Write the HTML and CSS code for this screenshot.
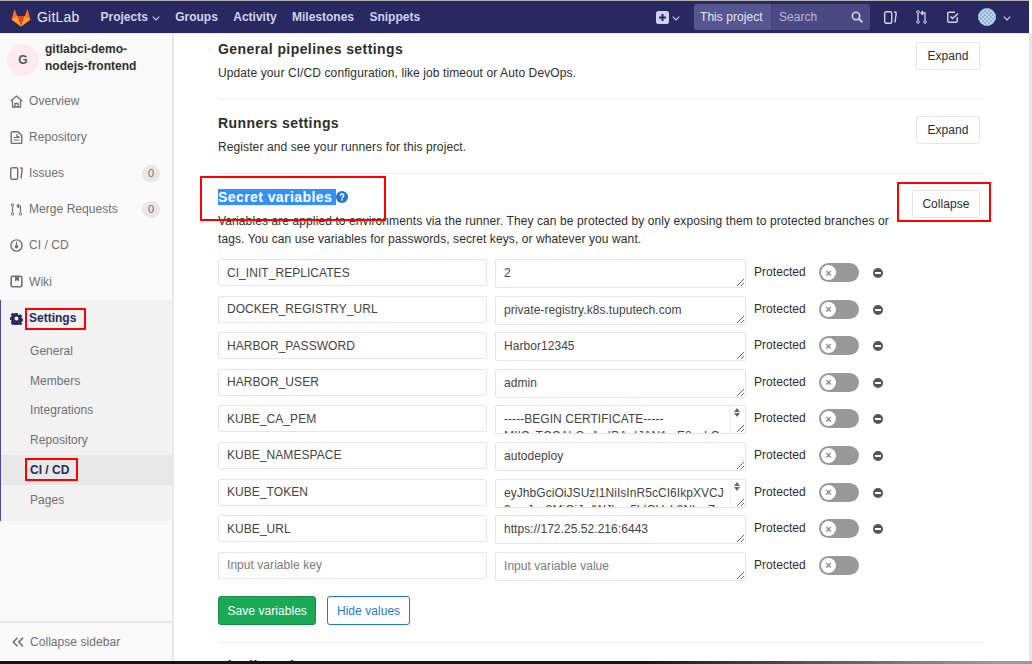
FILE: index.html
```html
<!DOCTYPE html>
<html lang="en">
<head>
    <meta charset="UTF-8">
    <meta name="viewport" content="width=device-width, initial-scale=1.0">
    <title>CI / CD Settings</title>
    <link rel="stylesheet" href="styles.css">
</head>
<body>
<div class="page">
    <header class="navbar">
        <a class="brand">
            <svg class="tanuki" width="20" height="19" viewBox="0 0 20 19">
                <path fill="#fc6d26" d="M10 18.5 0.6 11.4 3.4 1l2.9 7h7.4l2.9-7 2.8 10.4z"/>
                <path fill="#e24329" d="M10 18.5 6.3 8h7.4z"/>
                <path fill="#fca326" d="M0.6 11.4 6.3 8 10 18.5zM19.4 11.4 13.7 8 10 18.5z"/>
            </svg>
            <span class="brand-name">GitLab</span>
        </a>
        <nav class="nav-links">
            <a>Projects
                <svg class="caret" width="8" height="5" viewBox="0 0 8 5"><path d="M.7.7 4 4 7.3.7" fill="none" stroke="currentColor" stroke-width="1.1"/></svg>
            </a>
            <a>Groups</a>
            <a>Activity</a>
            <a>Milestones</a>
            <a>Snippets</a>
        </nav>
        <div class="nav-right">
            <span class="new-btn">
                <svg width="13" height="13" viewBox="0 0 13 13"><rect width="13" height="13" rx="2.5" fill="#d1d1f0"/><path d="M6.5 3v7M3 6.5h7" stroke="#292961" stroke-width="2"/></svg>
                <svg class="caret" width="8" height="5" viewBox="0 0 8 5"><path d="M.7.7 4 4 7.3.7" fill="none" stroke="currentColor" stroke-width="1.1"/></svg>
            </span>
            <div class="search">
                <span class="search-scope">This project</span>
                <span class="search-input">Search</span>
                <svg width="12" height="12" viewBox="0 0 12 12"><circle cx="5" cy="5" r="3.7" fill="none" stroke="#d1d1f0" stroke-width="1.6"/><path d="M7.8 7.8 11.3 11.3" stroke="#d1d1f0" stroke-width="2"/></svg>
            </div>
            <span class="nav-icon">
                <svg width="13" height="13" viewBox="0 0 13 13"><rect x=".7" y=".7" width="7" height="11.6" rx="1.5" fill="none" stroke="#d1d1f0" stroke-width="1.4"/><path d="M10 1h1.2q1 0 1 1.2L11 11.5" fill="none" stroke="#d1d1f0" stroke-width="1.4"/></svg>
            </span>
            <span class="nav-icon">
                <svg width="11" height="14" viewBox="0 0 11 14"><circle cx="2" cy="12" r="1.3" fill="none" stroke="#d1d1f0"/><circle cx="9" cy="12" r="1.3" fill="none" stroke="#d1d1f0"/><circle cx="2" cy="2" r="1.3" fill="none" stroke="#d1d1f0"/><path d="M2 3.5v7M9 10.5V3H6M7 1 5 3l2 2" fill="none" stroke="#d1d1f0" stroke-width="1.3"/></svg>
            </span>
            <span class="nav-icon">
                <svg width="12" height="12" viewBox="0 0 12 12"><path d="M8 1.2H2Q.8 1.2.8 2.4V10q0 1.2 1.2 1.2h7q1.2 0 1.2-1.2V6" fill="none" stroke="#d1d1f0" stroke-width="1.4"/><path d="M3.5 5.5 5.5 7.5 11 2.5" fill="none" stroke="#d1d1f0" stroke-width="1.5"/></svg>
            </span>
            <span class="avatar-wrap">
                <span class="user-avatar"></span>
                <svg class="caret" width="8" height="5" viewBox="0 0 8 5"><path d="M.7.7 4 4 7.3.7" fill="none" stroke="currentColor" stroke-width="1.1"/></svg>
            </span>
        </div>
    </header>

    <div class="layout">
        <aside class="sidebar">
            <div class="project-head">
                <span class="project-avatar">G</span>
                <span class="project-name">gitlabci-demo-<br>nodejs-frontend</span>
            </div>
            <ul class="side-menu">
                <li>
                    <svg width="13" height="13" viewBox="0 0 13 13"><path d="M.8 6 6.5 1l5.7 5M2.5 5.5V12h8V5.5M5 12V8.5h3V12" fill="none" stroke="#707070" stroke-width="1.3"/></svg>
                    Overview
                </li>
                <li>
                    <svg width="13" height="13" viewBox="0 0 13 13"><path d="M2.5.8H8l3.7 3.7v6.7q0 1.3-1.3 1.3H2.500q-1.300 0-1.300-1.300V2.100Q1.200.8 2.500.8z" fill="none" stroke="#707070" stroke-width="1.4"/><path d="M3.5 6.5h6M3.500 9h6M7 3v2.500h2.500" fill="none" stroke="#707070" stroke-width="1.2"/></svg>
                    Repository
                </li>
                <li>
                    <svg width="13" height="13" viewBox="0 0 13 13"><rect x=".7" y=".7" width="7" height="11.6" rx="1.5" fill="none" stroke="#707070" stroke-width="1.4"/><path d="M10 1h1.2q1 0 1 1.2L11 11.5" fill="none" stroke="#707070" stroke-width="1.4"/></svg>
                    Issues
                    <span class="count">0</span>
                </li>
                <li>
                    <svg width="13" height="13" viewBox="0 0 13 13"><circle cx="2.5" cy="11" r="1.2" fill="none" stroke="#707070"/><circle cx="10.5" cy="11" r="1.2" fill="none" stroke="#707070"/><circle cx="2.5" cy="2" r="1.2" fill="none" stroke="#707070"/><path d="M2.5 3.5v6M10.5 9.5V3H8M9 1 7 3l2 2" fill="none" stroke="#707070" stroke-width="1.2"/></svg>
                    Merge Requests
                    <span class="count">0</span>
                </li>
                <li>
                    <svg width="13" height="13" viewBox="0 0 13 13"><circle cx="6.5" cy="6.5" r="5.6" fill="none" stroke="#707070" stroke-width="1.4"/><circle cx="6.5" cy="7.8" r="1.8" fill="#707070"/><path d="M6.5 3v4" stroke="#707070" stroke-width="1.2"/></svg>
                    CI / CD
                </li>
                <li>
                    <svg width="13" height="13" viewBox="0 0 13 13"><rect x="1.2" y="1.2" width="10.6" height="10.6" rx="1.5" fill="none" stroke="#707070" stroke-width="1.6"/><path d="M5 1.5h4v5L7 5 5 6.5z" fill="#707070"/></svg>
                    Wiki
                </li>
            </ul>
            <div class="settings-group">
                <div class="settings-title">
                    <svg width="13" height="13" viewBox="0 0 13 13"><path fill-rule="evenodd" fill="#292961" d="M5.200.3h2.600l.4 1.800 1.300.6 1.600-1 1.800 1.900-1 1.500.6 1.400 1.800.4v2.400l-1.800.4-.6 1.300 1 1.600-1.800 1.500-1.600-1-1.300.6-.4 1.800H5.200l-.4-1.800-1.300-.6-1.600 1L.1 11l1-1.600-.6-1.300L-1.300 7.700V5.300l1.800-.4.6-1.400-1-1.500L2 .1l1.500 1 1.300-.6zM6.500 4.300a2.200 2.200 0 1 0 0 4.400 2.200 2.200 0 0 0 0-4.400z" transform="translate(.65 .65) scale(.9)"/></svg>
                    Settings
                </div>
                <ul class="sub-menu">
                    <li>General</li>
                    <li>Members</li>
                    <li>Integrations</li>
                    <li>Repository</li>
                    <li class="active">CI / CD</li>
                    <li>Pages</li>
                </ul>
            </div>
            <div class="collapse-bar">
                <svg width="12" height="10" viewBox="0 0 12 10"><path d="M5.5.8 1.3 5l4.200 4.200M11 .8 6.800 5 11 9.200" fill="none" stroke="#707070" stroke-width="1.6"/></svg>
                Collapse sidebar
            </div>
        </aside>

        <main class="content">
            <section class="settings-block first">
                <div class="block-text">
                    <h4>General pipelines settings</h4>
                    <p>Update your CI/CD configuration, like job timeout or Auto DevOps.</p>
                </div>
                <button class="btn btn-expand">Expand</button>
            </section>
            <section class="settings-block">
                <div class="block-text">
                    <h4>Runners settings</h4>
                    <p>Register and see your runners for this project.</p>
                </div>
                <button class="btn btn-expand">Expand</button>
            </section>
            <section class="settings-block open">
                <div class="block-head">
                    <div class="block-text">
                        <h4><span class="selected">Secret variables </span><svg class="help" width="12" height="12" viewBox="0 0 12 12"><circle cx="6" cy="6" r="6" fill="#1f78d1"/><path d="M4.200 4.700Q4.300 3 6 3t1.800 1.500Q7.800 5.500 6.800 6 6 6.400 6 7.200" fill="none" stroke="#fff" stroke-width="1.4"/><rect x="5.200" y="8" width="1.6" height="1.6" fill="#fff"/></svg></h4>
                        <p>Variables are applied to environments via the runner. They can be protected by only exposing them to protected branches or tags. You can use variables for passwords, secret keys, or whatever you want.</p>
                    </div>
                    <button class="btn btn-collapse">Collapse</button>
                </div>
                <div class="var-list" id="varList"></div>
                <div class="var-actions">
                    <button class="btn btn-save">Save variables</button>
                    <button class="btn btn-hide">Hide values</button>
                </div>
            </section>
            <section class="settings-block last">
                <h4>Pipeline triggers</h4>
            </section>
        </main>
    </div>
    <div class="bottom-edge"></div>

    <!-- red annotation boxes -->
    <div class="mark mark-title"></div>
    <div class="mark mark-collapse"></div>
    <div class="mark mark-settings"></div>
    <div class="mark mark-cicd"></div>
</div>

<script>
    const variables = [
        ['CI_INIT_REPLICATES', '2'],
        ['DOCKER_REGISTRY_URL', 'private-registry.k8s.tuputech.com'],
        ['HARBOR_PASSWORD', 'Harbor12345'],
        ['HARBOR_USER', 'admin'],
        ['KUBE_CA_PEM', '-----BEGIN CERTIFICATE-----\nMIICyTCCAbGgAwIBAgIJAN1mE8zzLQ', true],
        ['KUBE_NAMESPACE', 'autodeploy'],
        ['KUBE_TOKEN', 'eyJhbGciOiJSUzI1NiIsInR5cCI6IkpXVCJ9.eyJpc3MiOiJrdWJlcm5ldGVzL3NlcnZ', true],
        ['KUBE_URL', 'https://172.25.52.216:6443'],
        ['', '']
    ];

    const list = document.getElementById('varList');
    variables.forEach(([key, value, scroll]) => {
        const row = document.createElement('div');
        row.className = 'var-row';

        const keyInput = document.createElement('input');
        keyInput.className = 'var-key';
        keyInput.value = key;
        keyInput.placeholder = 'Input variable key';

        const valueWrap = document.createElement('div');
        valueWrap.className = 'value-wrap';

        const valueInput = document.createElement('textarea');
        valueInput.className = scroll ? 'var-value scroll' : 'var-value';
        valueInput.value = value;
        valueInput.placeholder = 'Input variable value';
        valueWrap.append(valueInput);

        // long values show the scrollbar steppers over the textarea
        if (scroll) {
            const arrows = document.createElement('span');
            arrows.className = 'scroll-arrows';
            valueWrap.append(arrows);
        }

        const label = document.createElement('span');
        label.className = 'var-label';
        label.textContent = 'Protected';

        const toggle = document.createElement('span');
        toggle.className = 'toggle';
        toggle.innerHTML = '<span class="knob">&times;</span>';

        row.append(keyInput, valueWrap, label, toggle);
        if (key) {
            const remove = document.createElement('span');
            remove.className = 'remove';
            row.append(remove);
        }
        list.append(row);
    });
</script>
</body>
</html>
```

FILE: styles.css
```css
* {
    box-sizing: border-box;
}

html, body {
    margin: 0;
    height: 100%;
    overflow: hidden;
}

body {
    font-family: "Liberation Sans", Arial, sans-serif;
    font-size: 12px;
    letter-spacing: 0.05px;
    color: #2e2e2e;
    background: #fff;
}

ul {
    list-style: none;
    margin: 0;
    padding: 0;
}

.page {
    position: relative;
    width: 1032px;
    height: 664px;
    display: flex;
    flex-direction: column;
    overflow: hidden;
}

/* top bar */
.navbar {
    height: 34px;
    flex: none;
    display: flex;
    align-items: center;
    margin-right: 3px;
    background: #292961;
    border-top: 1px solid #b5b2ae;
    border-bottom: 1px solid #e5e5f2;
    padding: 0 18px 0 11px;
    color: #d1d1f0;
}

.brand {
    display: flex;
    align-items: center;
    gap: 6px;
}

.brand-name {
    font-size: 14px;
    letter-spacing: 0.2px;
    color: #e6e6f5;
}

.nav-links {
    display: flex;
    gap: 15.4px;
    margin-left: 21px;
    font-weight: bold;
    letter-spacing: 0;
}

.nav-links a {
    display: flex;
    align-items: center;
    gap: 4px;
}

.caret {
    margin-top: 2px;
}

.nav-right {
    margin-left: auto;
    display: flex;
    align-items: center;
}

.new-btn {
    display: flex;
    align-items: center;
    gap: 3px;
    margin-right: 14px;
}

.search {
    width: 176px;
    height: 26px;
    display: flex;
    align-items: center;
    background: #4a4a82;
    border-radius: 3px;
    overflow: hidden;
    margin-right: 5px;
}

.search-scope {
    height: 100%;
    display: flex;
    align-items: center;
    padding: 0 6px;
    width: 78px;
    background: #565691;
    border-right: 1px solid #414175;
    color: #e6e6f5;
    white-space: nowrap;
}

.search-input {
    flex: 1;
    padding-left: 7px;
    color: #b5b5dc;
}

.search svg {
    margin-right: 7px;
}

.nav-icon {
    width: 31px;
    display: flex;
    justify-content: center;
}

.avatar-wrap {
    display: flex;
    align-items: center;
    gap: 7px;
    margin-left: 10px;
}

.user-avatar {
    width: 18px;
    height: 18px;
    border-radius: 50%;
    background: repeating-conic-gradient(#bcd8e8 0 25%, #8fb6cf 0 50%) 0 0 / 4px 4px;
}

/* sidebar */
.layout {
    flex: 1;
    min-height: 0;
    display: flex;
    border-right: 3px solid #e6e6e6;
}

.sidebar {
    width: 174px;
    flex: none;
    display: flex;
    flex-direction: column;
    background: #fafafa;
    border-right: 2px solid #e9e9e9;
    color: #707070;
}

.project-head {
    display: flex;
    gap: 6px;
    padding: 7px 0 0 7px;
    height: 49px;
}

.project-avatar {
    width: 32px;
    height: 32px;
    margin-top: 3px;
    border-radius: 50%;
    background: #ffebee;
    color: #555;
    display: flex;
    align-items: center;
    justify-content: center;
    font-weight: bold;
}

.project-name {
    font-weight: bold;
    color: #2e2e2e;
    line-height: 17px;
    letter-spacing: 0;
}

.side-menu {
    padding-bottom: 0.6px;
}

.side-menu li {
    height: 36.1px;
    display: flex;
    align-items: center;
    gap: 6px;
    padding: 0 12px 0 10px;
}

.count {
    margin-left: auto;
    width: 18px;
    height: 17px;
    border-radius: 9px;
    background: #e8e8e8;
    text-align: center;
    line-height: 17px;
    font-size: 11px;
}

.settings-group {
    height: 221px;
    background: #f2f2f2;
    border-left: 1px solid #4b4ba3;
}

.settings-title {
    height: 35.7px;
    display: flex;
    align-items: center;
    gap: 6px;
    padding-left: 9px;
    font-weight: bold;
    letter-spacing: 0;
    color: #292961;
}

.sub-menu li {
    height: 29.8px;
    line-height: 30px;
    padding-left: 29px;
}

.sub-menu .active {
    background: #e8e8e8;
    color: #292961;
    font-weight: bold;
    letter-spacing: 0;
}

.collapse-bar {
    margin-top: auto;
    height: 40px;
    display: flex;
    align-items: center;
    gap: 6px;
    padding-left: 12px;
    border-top: 2px solid #e9e9e9;
}

/* main column */
.content {
    flex: 1;
    min-width: 0;
    padding: 0 45px 0 44px;
    overflow: hidden;
}

.settings-block {
    display: flex;
    justify-content: space-between;
    height: 74px;
    padding-top: 13px;
    border-bottom: 1px solid #eee;
}

.settings-block.first {
    height: 66px;
    padding-top: 5px;
}

.settings-block.open {
    display: block;
    height: 469px;
    padding-top: 13px;
}

.settings-block.last {
    padding-top: 13px;
    border: 0;
}

h4 {
    margin: 0;
    font-size: 14px;
    line-height: 20px;
    letter-spacing: 0.42px;
    color: #2e2e2e;
}

p {
    margin: 5px 0 0;
    line-height: 18px;
    letter-spacing: 0.1px;
}

.selected {
    background: #3390ff;
    color: #fff;
    white-space: pre;
}

.help {
    vertical-align: -1px;
}

.btn {
    font: inherit;
    letter-spacing: inherit;
    height: 28px;
    padding: 0 9px;
    background: #fff;
    border: 1px solid #e5e5e5;
    border-radius: 3px;
    color: #2e2e2e;
}

.btn-expand {
    width: 64px;
    margin: 3px 4px 0 0;
    padding: 0;
}

.btn-collapse {
    margin: 3px 4px 0 0;
    padding: 0 9.5px;
}

.block-head {
    display: flex;
    justify-content: space-between;
    align-items: flex-start;
}

.block-head .block-text {
    width: 680px;
}

.var-list {
    margin-top: 11px;
}

.var-row {
    height: 36.6px;
    display: flex;
    align-items: flex-start;
}

.var-key,
.var-value {
    font-family: inherit;
    font-size: 12px;
    letter-spacing: inherit;
    color: #444;
    background: #fff;
    border: 1px solid #e5e5e5;
    border-radius: 2px;
    padding: 5px 8px;
    margin: 0;
}

.var-key::placeholder,
.var-value::placeholder {
    color: #7b7b7b;
}

.var-key {
    width: 269px;
    height: 27px;
    margin-right: 8px;
}

.value-wrap {
    position: relative;
    width: 251px;
    height: 29px;
}

.var-value {
    display: block;
    width: 251px;
    height: 29px;
    line-height: 17px;
    resize: vertical;
    overflow: hidden;
}

.var-value.scroll {
    padding-right: 21px;
}

.scroll-arrows {
    position: absolute;
    top: 1px;
    right: 1px;
    bottom: 1px;
    width: 15px;
    border-left: 1px solid #eee;
    pointer-events: none;
}

.scroll-arrows::before,
.scroll-arrows::after {
    content: "";
    position: absolute;
    left: 3px;
    border-left: 3px solid transparent;
    border-right: 3px solid transparent;
}

.scroll-arrows::before {
    top: 2px;
    border-bottom: 4px solid #666;
}

.scroll-arrows::after {
    top: 7px;
    border-top: 4px solid #666;
}

.var-label {
    margin: 6px 0 0 8px;
    width: 65px;
}

.toggle {
    width: 40px;
    height: 19px;
    margin-top: 4px;
    padding: 2px;
    border-radius: 10px;
    background: #999;
    display: block;
}

.knob {
    display: flex;
    align-items: center;
    justify-content: center;
    width: 15px;
    height: 15px;
    border-radius: 50%;
    background: #fff;
    color: #888;
    font-size: 11px;
    font-weight: bold;
    letter-spacing: 0;
}

.remove {
    position: relative;
    width: 10px;
    height: 10px;
    margin: 9px 0 0 14px;
    border-radius: 50%;
    background: #555;
}

.remove::after {
    content: "";
    position: absolute;
    left: 2px;
    right: 2px;
    top: 4px;
    height: 2px;
    background: #fff;
}

.var-actions {
    display: flex;
    gap: 10.5px;
    margin-top: 8px;
}

.var-actions .btn {
    height: 29px;
    padding: 0 8.5px;
}

.btn-save {
    background: #1aaa55;
    border-color: #168f48;
    color: #fff;
}

.var-actions .btn-hide {
    padding: 0 9px;
    border-color: #1f78d1;
    color: #1f78d1;
}

.bottom-edge {
    height: 3px;
    flex: none;
    background: linear-gradient(to right, #1a1016 62%, #999 96%);
}

/* annotations drawn on top of the screenshot */
.mark {
    position: absolute;
    border: 2px solid #f00;
}

.mark-title {
    left: 200px;
    top: 176px;
    width: 186px;
    height: 45px;
}

.mark-collapse {
    left: 897px;
    top: 182px;
    width: 94px;
    height: 40px;
}

.mark-settings {
    left: 25px;
    top: 308px;
    width: 61px;
    height: 22px;
}

.mark-cicd {
    left: 25px;
    top: 458px;
    width: 53px;
    height: 23px;
}
```
